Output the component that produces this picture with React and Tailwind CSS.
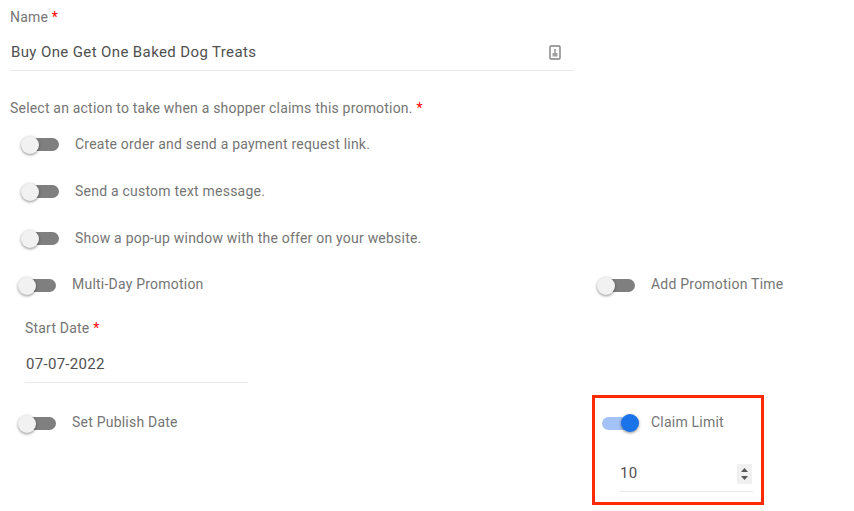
const font = { fontFamily: "Roboto, sans-serif" };

function Toggle({ on = false, className = "" }) {
  return (
    <div className={`relative h-[13px] w-[33px] shrink-0 rounded-full ${on ? "bg-[#a3c2f7]" : "bg-[#7f7f7f]"} ${className}`}>
      <div
        className={`absolute rounded-full shadow-[0_1px_3px_rgba(0,0,0,0.45)] ${on ? "left-[19px] top-[-3px] h-[18px] w-[18px] bg-[#1a73e8]" : "left-[-5px] top-[-2px] h-[18px] w-[18px] bg-[#f1f1f1]"}`}
      />
    </div>
  );
}

function Star() {
  return <span className="text-[#ff0000]"> *</span>;
}

function Label({ children, className = "" }) {
  return <span className={`mb-px text-[14px] tracking-[0.22px] text-[#757575] ${className}`}>{children}</span>;
}

function ActionRow({ children }) {
  return (
    <div className="flex h-[47px] items-center pl-[26px]">
      <Toggle />
      <Label className="ml-[16px]">{children}</Label>
    </div>
  );
}

function FieldIcon() {
  return (
    <svg width="12" height="15" viewBox="0 0 12 15" fill="none">
      <rect x="1" y="1" width="10" height="13" rx="1" stroke="#808080" strokeWidth="1.4" />
      <rect x="3.5" y="8" width="5" height="3.5" fill="#a0a0a0" />
      <rect x="5" y="4" width="2" height="4" fill="#b0b0b0" />
    </svg>
  );
}

export default function App() {
  return (
    <div className="h-[511px] w-[854px] overflow-hidden bg-white" style={font}>
      <div className="w-[574px] pl-[10px] pt-[9px]">
        <div className="text-[14px] leading-[17px] tracking-[0.2px] text-[#757575]">
          Name<Star />
        </div>
        <div className="flex h-[45px] items-center justify-between border-b border-[#e8e8e8] pl-px pr-[13px] pt-[9px]">
          <span className="text-[15px] tracking-[0.38px] text-[#505050]">Buy One Get One Baked Dog Treats</span>
          <FieldIcon />
        </div>
        <div className="mt-[29px] text-[14px] leading-[17px] tracking-[0.2px] text-[#757575]">
          Select an action to take when a shopper claims this promotion.<Star />
        </div>
      </div>

      <div className="mt-[4px]">
        <ActionRow>Create order and send a payment request link.</ActionRow>
        <ActionRow>Send a custom text message.</ActionRow>
        <ActionRow>Show a pop-up window with the offer on your website.</ActionRow>
      </div>

      <div className="flex">
        <div className="w-[592px]">
          <div className="flex h-[46px] items-center pl-[23px]">
            <Toggle />
            <Label className="ml-[16px]">Multi-Day Promotion</Label>
          </div>
          <div className="w-[248px] pl-[25px] pt-[12px]">
            <div className="text-[14px] leading-[17px] tracking-[0.2px] text-[#757575]">
              Start Date<Star />
            </div>
            <div className="flex h-[46px] items-center border-b border-[#e8e8e8] pl-px pt-[10px] text-[15px] tracking-[0.3px] text-[#505050]">
              07-07-2022
            </div>
          </div>
          <div className="mt-[17px] flex h-[46px] items-center pl-[23px]">
            <Toggle />
            <Label className="ml-[16px]">Set Publish Date</Label>
          </div>
        </div>

        <div>
          <div className="flex h-[46px] items-center pl-[10px]">
            <Toggle />
            <Label className="ml-[16px]">Add Promotion Time</Label>
          </div>
          <div className="mt-[87px] h-[110px] w-[172px] border-[3px] border-[#ff2a00] pl-[7px] pt-[11px]">
            <div className="flex h-[28px] items-center">
              <Toggle on />
              <Label className="ml-[16px]">Claim Limit</Label>
            </div>
            <div className="ml-[18px] mt-[11px] flex h-[44px] w-[133px] items-center justify-between border-b border-[#e8e8e8] pr-px pt-[8px]">
              <span className="text-[15px] tracking-[0.3px] text-[#505050]">10</span>
              <div className="flex h-5 w-[15px] items-center justify-center bg-[#f0f0f0]">
                <svg width="9" height="14" viewBox="0 0 9 14">
                  <path d="M4.5 1 L8 5 H1 Z" fill="#555" />
                  <path d="M4.5 13 L1 9 H8 Z" fill="#555" />
                </svg>
              </div>
            </div>
          </div>
        </div>
      </div>
    </div>
  );
}
